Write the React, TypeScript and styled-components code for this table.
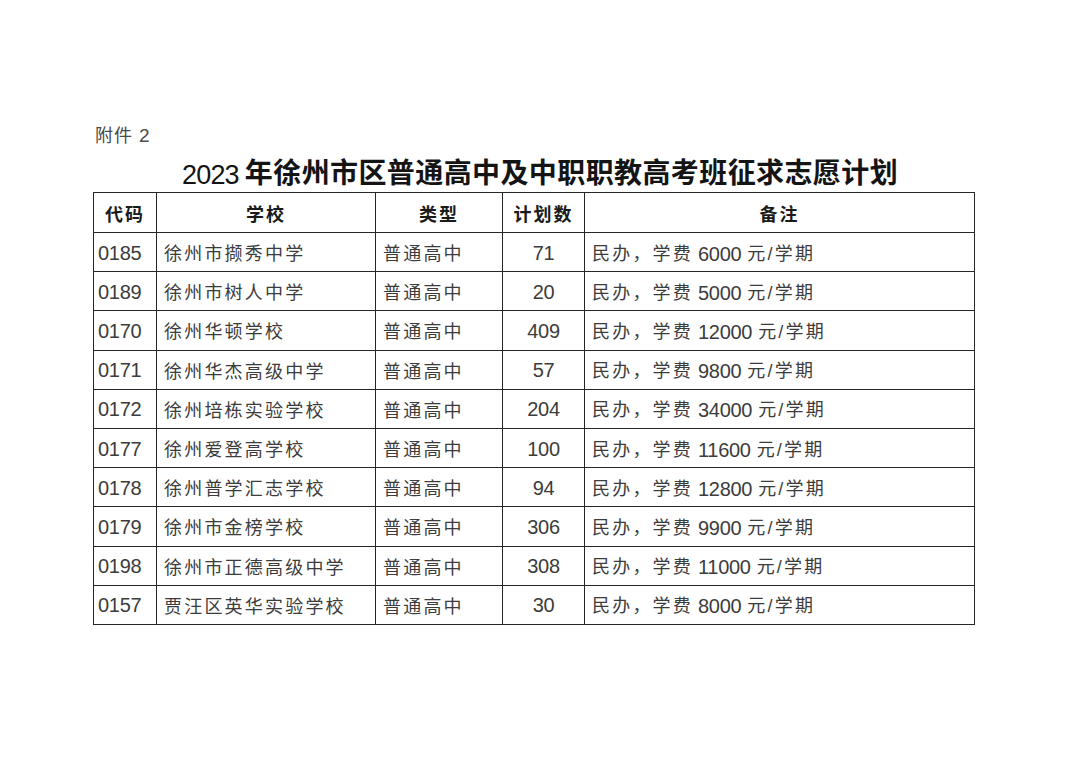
import React from "react";
import styled, { createGlobalStyle } from "styled-components";

const Global = createGlobalStyle`
  html, body { margin: 0; padding: 0; background: #ffffff; }
  body { font-family: "Liberation Sans", "Noto Sans CJK SC", sans-serif; }
`;

const Page = styled.div`
  width: 1080px;
  height: 764px;
  box-sizing: border-box;
  padding-top: 124px;
  display: flex;
  flex-direction: column;
  background: #fff;
`;

const Attachment = styled.div`
  margin-left: 95px;
  height: 24px;
  line-height: 24px;
  font-size: 18px;
  color: #4a4a4a;
  letter-spacing: 1px;
`;

const AttachNum = styled.span`
  font-size: 19px;
  letter-spacing: 0;
`;

const Title = styled.h1`
  margin: 8px 0 0 0;
  height: 36px;
  line-height: 36px;
  text-align: center;
  font-size: 28px;
  font-weight: 700;
  color: #141414;
  letter-spacing: 0.4px;
`;

const Year = styled.span`
  font-size: 27px;
  font-weight: 400;
  letter-spacing: -0.8px;
  margin-right: 6px;
  vertical-align: -1px;
`;

const Table = styled.table`
  margin-left: 93px;
  width: 881px;
  border-collapse: collapse;
  table-layout: fixed;
`;

const Head = styled.th<{ $w: number }>`
  width: ${(p) => p.$w}px;
  height: 40px;
  box-sizing: border-box;
  border: 1px solid #262626;
  font-size: 18px;
  font-weight: 700;
  color: #1a1a1a;
  letter-spacing: 2px;
  text-align: center;
  padding: 0;
`;

const Row = styled.tr`
  height: 39.2px;
`;

const Cell = styled.td<{ $align?: "left" | "center"; $pad?: number; $numeric?: boolean }>`
  border: 1px solid #262626;
  font-size: 18px;
  font-weight: 400;
  color: #3c3c3c;
  letter-spacing: 2.2px;
  text-align: ${(p) => p.$align ?? "left"};
  padding: ${(p) => (p.$numeric ? 2 : 0)}px 0 0
    ${(p) => (p.$align === "center" ? 0 : p.$pad ?? 7)}px;
  white-space: nowrap;
`;

const Num = styled.span<{ $before?: number; $after?: number }>`
  font-size: 20px;
  letter-spacing: -0.3px;
  vertical-align: -1px;
  margin-left: ${(p) => p.$before ?? 0}px;
  margin-right: ${(p) => p.$after ?? 0}px;
`;

type Item = { code: string; name: string; type: string; count: string; fee: string };

const rows: Item[] = [
  { code: "0185", name: "徐州市撷秀中学", type: "普通高中", count: "71", fee: "6000" },
  { code: "0189", name: "徐州市树人中学", type: "普通高中", count: "20", fee: "5000" },
  { code: "0170", name: "徐州华顿学校", type: "普通高中", count: "409", fee: "12000" },
  { code: "0171", name: "徐州华杰高级中学", type: "普通高中", count: "57", fee: "9800" },
  { code: "0172", name: "徐州培栋实验学校", type: "普通高中", count: "204", fee: "34000" },
  { code: "0177", name: "徐州爱登高学校", type: "普通高中", count: "100", fee: "11600" },
  { code: "0178", name: "徐州普学汇志学校", type: "普通高中", count: "94", fee: "12800" },
  { code: "0179", name: "徐州市金榜学校", type: "普通高中", count: "306", fee: "9900" },
  { code: "0198", name: "徐州市正德高级中学", type: "普通高中", count: "308", fee: "11000" },
  { code: "0157", name: "贾汪区英华实验学校", type: "普通高中", count: "30", fee: "8000" },
];

export default function App() {
  return (
    <>
      <Global />
      <Page>
        <Attachment>
          附件 <AttachNum>2</AttachNum>
        </Attachment>
        <Title>
          <Year>2023</Year>年徐州市区普通高中及中职职教高考班征求志愿计划
        </Title>
        <Table>
          <thead>
            <tr>
              <Head $w={63}>代码</Head>
              <Head $w={219}>学校</Head>
              <Head $w={127}>类型</Head>
              <Head $w={82}>计划数</Head>
              <Head $w={390}>备注</Head>
            </tr>
          </thead>
          <tbody>
            {rows.map((r) => (
              <Row key={r.code}>
                <Cell $pad={4} $numeric>
                  <Num>{r.code}</Num>
                </Cell>
                <Cell>{r.name}</Cell>
                <Cell>{r.type}</Cell>
                <Cell $align="center" $numeric>
                  <Num>{r.count}</Num>
                </Cell>
                <Cell>
                  民办，学费<Num $before={5} $after={6}>{r.fee}</Num>元/学期
                </Cell>
              </Row>
            ))}
          </tbody>
        </Table>
      </Page>
    </>
  );
}
